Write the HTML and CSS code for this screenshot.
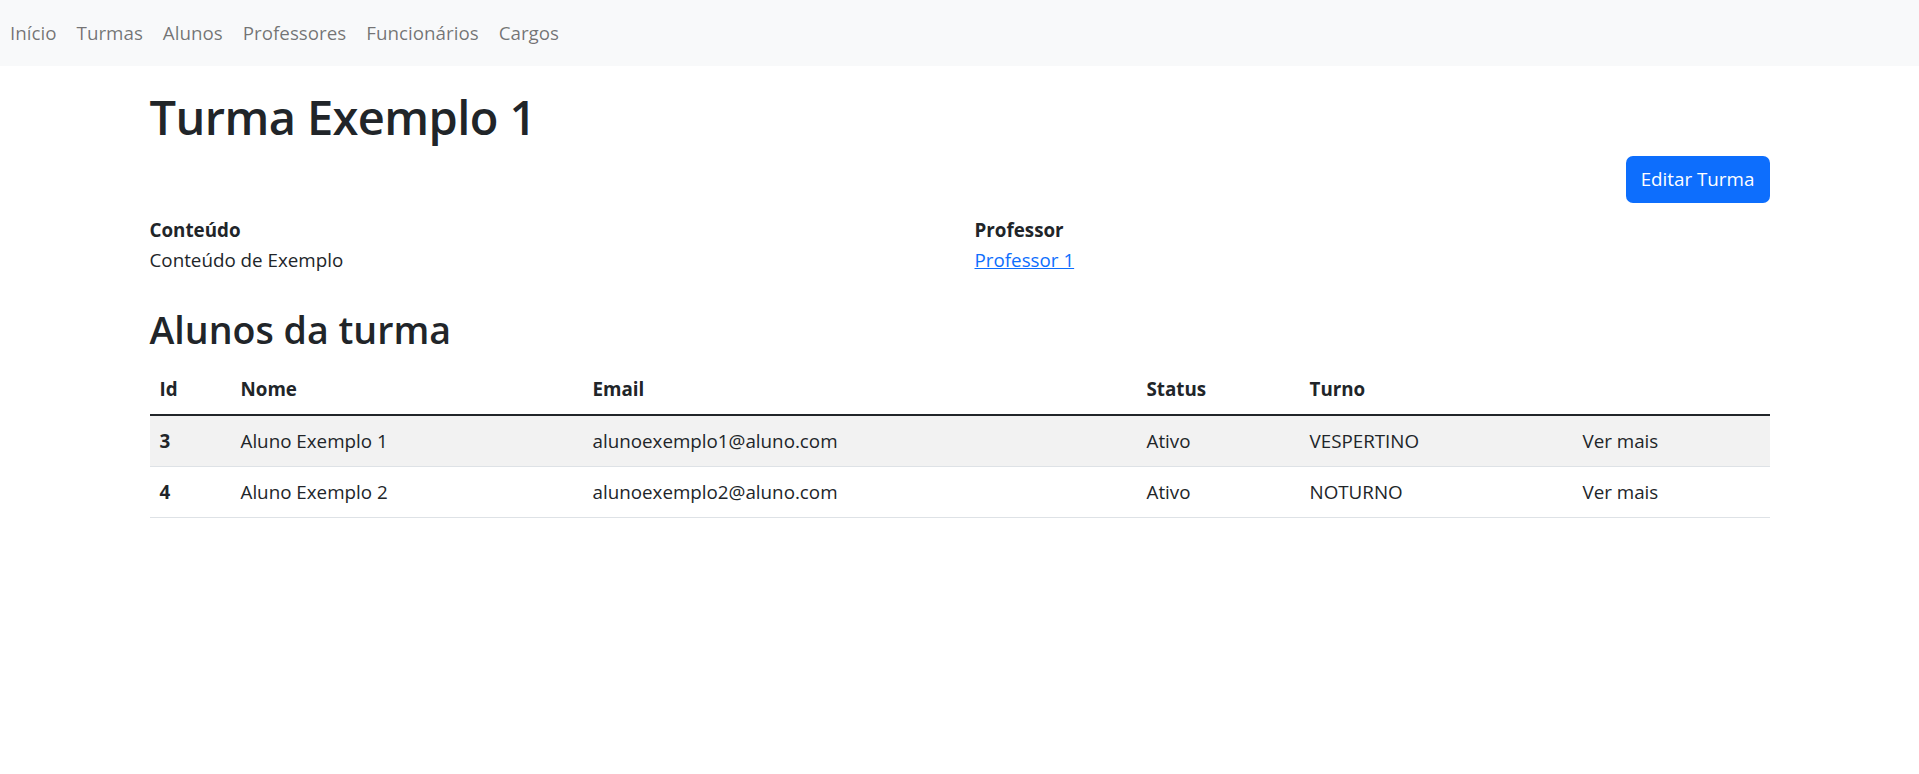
FILE: index.html
```html
<!DOCTYPE html>
<html lang="pt-BR">
<head>
<meta charset="utf-8">
<title>Turma Exemplo 1</title>
<link rel="stylesheet" href="styles.css">
</head>
<body>
<nav class="navbar">
  <a class="nav-link" href="#">Início</a>
  <a class="nav-link" href="#">Turmas</a>
  <a class="nav-link" href="#">Alunos</a>
  <a class="nav-link" href="#">Professores</a>
  <a class="nav-link" href="#">Funcionários</a>
  <a class="nav-link" href="#">Cargos</a>
</nav>
<main class="container">
  <h1 class="title">Turma Exemplo 1</h1>
  <div class="actions">
    <a class="btn" href="#">Editar Turma</a>
  </div>
  <div class="info">
    <dl class="info-col">
      <dt>Conteúdo</dt>
      <dd>Conteúdo de Exemplo</dd>
    </dl>
    <dl class="info-col">
      <dt>Professor</dt>
      <dd><a class="link" href="#">Professor 1</a></dd>
    </dl>
  </div>
  <h2 class="subtitle">Alunos da turma</h2>
  <table class="table">
    <colgroup>
      <col class="c-id"><col class="c-nome"><col class="c-email"><col class="c-status"><col class="c-turno"><col class="c-acao">
    </colgroup>
    <thead>
      <tr><th>Id</th><th>Nome</th><th>Email</th><th>Status</th><th>Turno</th><th></th></tr>
    </thead>
    <tbody>
      <tr class="odd"><th>3</th><td>Aluno Exemplo 1</td><td>alunoexemplo1@aluno.com</td><td>Ativo</td><td>VESPERTINO</td><td>Ver mais</td></tr>
      <tr><th>4</th><td>Aluno Exemplo 2</td><td>alunoexemplo2@aluno.com</td><td>Ativo</td><td>NOTURNO</td><td>Ver mais</td></tr>
    </tbody>
  </table>
</main>
</body>
</html>
```
FILE: styles.css
```css
* { box-sizing: border-box; }
html, body { margin: 0; padding: 0; }
body {
  font-family: "Segoe UI", "Open Sans", "Noto Sans", "Liberation Sans", sans-serif;
  font-size: 18.8px;
  line-height: 1.5;
  color: #212529;
  background: #fff;
}
.navbar {
  display: flex;
  align-items: center;
  height: 66px;
  background: #f8f9fa;
}
.nav-link {
  padding: 0 10px;
  color: rgba(0, 0, 0, 0.55);
  text-decoration: none;
  line-height: 30px;
}
.container {
  width: 1620px;
  margin: 0 auto;
}
.title {
  margin: 21px 0 0;
  font-size: 47px;
  font-weight: 600;
  letter-spacing: -0.6px;
  line-height: 60px;
  height: 69px;
}
.actions {
  display: flex;
  justify-content: flex-end;
}
.btn {
  display: inline-block;
  width: 144px;
  height: 47px;
  line-height: 46px;
  text-align: center;
  background: #0d6efd;
  color: #fff;
  text-decoration: none;
  border-radius: 7px;
}
.info {
  display: flex;
  margin-top: 12px;
  column-gap: 30px;
}
.info-col {
  flex: 1;
  margin: 0;
}
.info-col dt { font-weight: 700; line-height: 30px; }
.info-col dd { margin: 0; line-height: 30px; }
.link { color: #0d6efd; text-decoration: underline; }
.subtitle {
  margin: 31px 0 10px;
  font-size: 37.6px;
  font-weight: 600;
  letter-spacing: 0;
  line-height: 48px;
}
.table {
  width: 100%;
  border-collapse: collapse;
  table-layout: fixed;
}
.c-id { width: 81px; }
.c-nome { width: 352px; }
.c-email { width: 554px; }
.c-status { width: 163px; }
.c-turno { width: 273px; }
.c-acao { width: 197px; }
.table th, .table td {
  padding: 10px;
  text-align: left;
  line-height: 30px;
  vertical-align: top;
}
.table thead th {
  font-weight: 700;
  border-bottom: 2.5px solid #212529;
}
.table tbody th, .table tbody td {
  border-bottom: 1.25px solid #dee2e6;
  font-weight: 400;
}
.table tbody th { font-weight: 700; }
.table tbody tr.odd { background: #f2f2f2; }
```
